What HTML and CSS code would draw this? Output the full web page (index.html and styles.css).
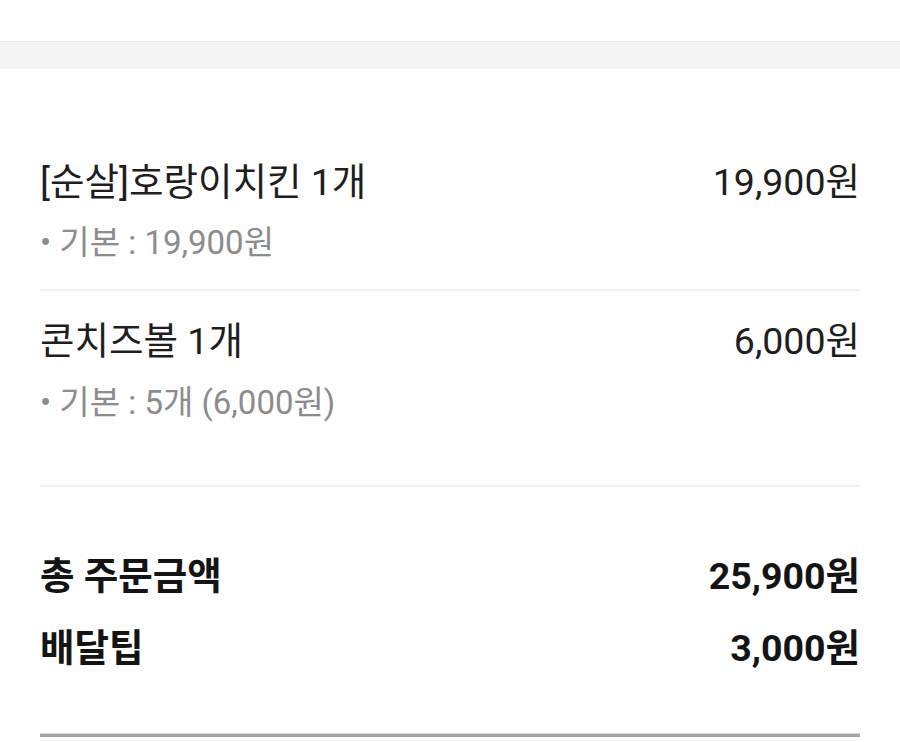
FILE: index.html
```html
<!DOCTYPE html>
<html lang="ko">
<head>
<meta charset="utf-8">
<link rel="stylesheet" href="styles.css">
</head>
<body>
<div class="top"></div>
<div class="band"></div>
<div class="content">
  <div class="item first">
    <div class="row title"><span>[순살]호랑이치킨 1개</span><span>19,900원</span></div>
    <div class="sub">• 기본 : 19,900원</div>
  </div>
  <div class="item second">
    <div class="row title"><span>콘치즈볼 1개</span><span>6,000원</span></div>
    <div class="sub">• 기본 : 5개 (6,000원)</div>
  </div>
  <div class="totals">
    <div class="row total"><span>총 주문금액</span><span>25,900원</span></div>
    <div class="row total tip"><span>배달팁</span><span>3,000원</span></div>
  </div>
  <div class="bottom-line"></div>
</div>
</body>
</html>
```
FILE: styles.css
```css
html, body {
  margin: 0;
  padding: 0;
  background: #fefefe;
  font-family: Roboto, "Noto Sans CJK KR", sans-serif;
}
.top {
  height: 41px;
  background: #fefefe;
}
.band {
  height: 26px;
  background: #f4f4f4;
  border-top: 1px solid #e6e6e6;
  border-bottom: 1px solid #f8f8f8;
}
.content {
  padding: 0 40px;
}
.row {
  display: flex;
  justify-content: space-between;
  align-items: center;
}
.title {
  font-size: 37.5px;
  line-height: 40px;
  color: #1e1e1e;
}
.sub {
  font-size: 33px;
  line-height: 36px;
  color: #8c8c8c;
}
.item {
  border-bottom: 2px solid #f0f0f0;
}
.first {
  padding-top: 93px;
  padding-bottom: 28px;
}
.first .sub {
  margin-top: 23px;
}
.second {
  padding-top: 30px;
  padding-bottom: 64px;
}
.second .sub {
  margin-top: 24px;
}
.totals {
  padding-top: 69px;
  padding-bottom: 65px;
}
.total {
  font-size: 37.5px;
  line-height: 40px;
  font-weight: 700;
  color: #141414;
}
.tip {
  margin-top: 32px;
}
.bottom-line {
  height: 3px;
  background: #a4a4a4;
  border-top: 1px solid #d8d8d8;
}
```
